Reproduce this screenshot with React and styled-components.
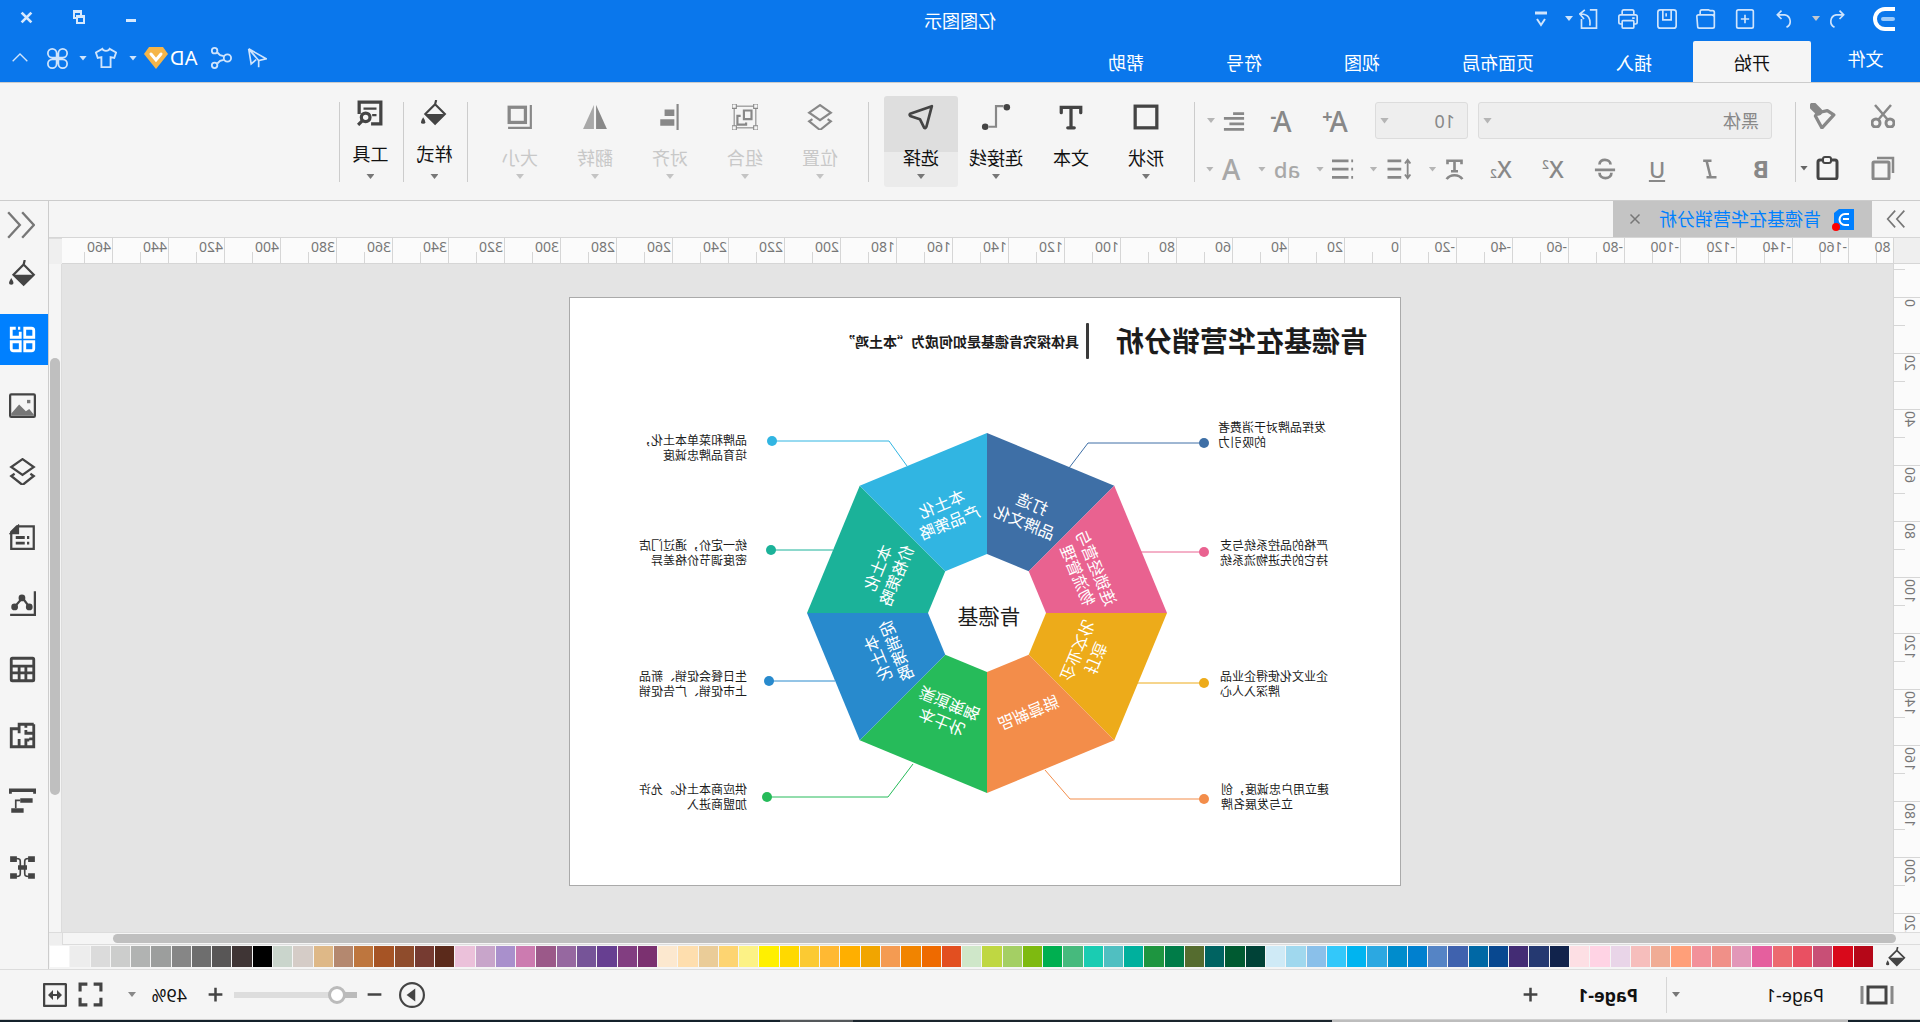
import React from 'react'
import styled, { createGlobalStyle } from 'styled-components'

const GlobalStyle = createGlobalStyle`
    *{ box-sizing:border-box; }
    body{ margin:0; background:#f5f5f5; overflow:hidden; }
    button, select, input{ font:inherit; color:inherit; margin:0; }
    button{ background:none; border:none; padding:0; cursor:pointer; }
    svg{ display:block; flex-shrink:0; }
`

// the whole window is shown flipped, as in a mirrored camera feed
const Window = styled.div`
    height:100vh;
    display:flex;
    flex-direction:column;
    transform:scaleX(-1);
    font-family:"Noto Sans", "Noto Sans CJK SC", sans-serif;
    font-size:18px;
    line-height:24px;
    color:#222;
    background:#f5f5f5;
`
const Caret = styled.span`
    flex-shrink:0;
    width:8px;
    height:5px;
    margin-left:${p => p.$ml || 0}px;
    background:${p => p.$color || '#b5b5b5'};
    clip-path:polygon(0 0, 100% 0, 50% 100%);
`

/* ---------- header ---------- */
const Header = styled.header`
    background:#0a77ec;
    color:#fff;
    border-bottom:1px solid #ccc;
`
const TitleRow = styled.div`
    display:grid;
    grid-template-columns:1fr auto 1fr;
    height:37px;
    align-items:center;
`
const QuickBar = styled.div`
    display:flex;
    align-items:center;
    padding-left:24px;
    color:#cfe4fc;
`
const QuickButton = styled.button`
    width:39px;
    height:36px;
    display:flex;
    align-items:center;
    justify-content:center;
    margin-left:${p => p.$ml || 0}px;
`
const AppTitle = styled.h1`
    margin:0;
    padding-top:4px;
    font-size:18px;
    line-height:24px;
    font-weight:400;
`
const WindowButtons = styled.div`
    display:flex;
    justify-content:flex-end;
    padding:0 1px 3px 0;
    color:#d7e9fd;
`
const WindowButton = styled.button`
    width:52px;
    height:33px;
    display:flex;
    align-items:center;
    justify-content:center;
`
const TabRow = styled.div`
    display:flex;
    height:45px;
    align-items:flex-end;
`
const FileTab = styled.button`
    width:109px;
    height:45px;
    padding-bottom:1px;
`
const Tab = styled.button`
    height:41px;
    padding:2px 41px 0 41px;
    background:${p => p.$active ? '#f5f5f5' : 'none'};
    color:${p => p.$active ? '#111' : '#fff'};
    border-radius:2px 2px 0 0;
`
const UserTools = styled.div`
    display:flex;
    align-items:center;
    height:45px;
    margin-left:auto;
    padding:0 12px 3px 0;
    color:#cfe4fc;
`
const UserButton = styled.button`
    display:flex;
    align-items:center;
    margin-left:${p => p.$ml || 0}px;
`
const UserName = styled.span`
    margin-left:13px;
    font-size:20px;
    color:#fff;
`

/* ---------- ribbon ---------- */
const Ribbon = styled.div`
    display:flex;
    height:118px;
    flex-shrink:0;
    border-bottom:1px solid #ccc;
    color:#888;
`
const Divider = styled.div`
    width:1px;
    height:80px;
    margin-top:19px;
    background:#ccc;
`
const Clipboard = styled.div`
    display:grid;
    grid-template-columns:56px 43px;
    grid-auto-rows:26px;
    row-gap:26px;
    padding:20px 0 0 25px;
    width:124px;
`
const ToolButton = styled.button`
    display:flex;
    align-items:center;
    gap:7px;
    padding-left:${p => p.$pl || 0}px;
    color:${p => p.$dark ? '#444' : 'inherit'};
`
const FontGroup = styled.div`
    padding:19px 0 0 8px;
`
const FontRow = styled.div`
    display:flex;
    align-items:center;
    height:${p => p.$tall ? 37 : 24}px;
    padding-left:${p => p.$tall ? 15 : 0}px;
    margin-bottom:18px;
`
const SelectBox = styled.label`
    display:grid;
    grid-template-columns:1fr 20px;
    align-items:center;
    width:${p => p.$width}px;
    height:37px;
    margin-right:${p => p.$mr}px;
    background:#eee;
    border:1px solid #dcdcdc;
    border-radius:3px;
`
const Select = styled.select`
    grid-area:1 / 1 / 2 / 3;
    appearance:none;
    width:100%;
    height:35px;
    padding:0 12px;
    border:none;
    background:none;
    color:#888;
    outline:none;
`
const SelectArrow = styled(Caret)`
    grid-area:1 / 2 / 2 / 3;
    justify-self:end;
    margin-right:4px;
    width:9px;
    height:6px;
`
const FontButton = styled.button`
    width:${p => p.$width || 52}px;
    height:26px;
    display:flex;
    align-items:center;
    justify-content:center;
    gap:8px;
`
const Glyph = styled.span`
    font-size:${p => p.$size || 24}px;
    line-height:26px;
    font-weight:${p => p.$weight || 500};
    color:${p => p.$light ? '#a8a8a8' : '#888'};
    sup, sub{ font-size:12px; line-height:0; }
    sub{ vertical-align:baseline; }
    b{ font-size:18px; line-height:0; vertical-align:9px; margin-left:-3px; }
`
const BigGroup = styled.div`
    display:flex;
    gap:1px;
    padding:13px ${p => p.$narrow ? 0 : 15}px 0 ${p => p.$narrow ? 0 : 11}px;
`
const BigButton = styled.button`
    width:${p => p.$narrow ? 63 : 74}px;
    height:91px;
    padding:${p => p.$narrow ? '4px 0 8px 2px' : '8px 0'};
    display:flex;
    flex-direction:column;
    align-items:center;
    border-radius:3px;
    color:${p => p.$disabled ? '#888' : '#444'};
    background:${p => p.$active ? 'linear-gradient(#dedede 56px, #ebebeb 56px)' : 'none'};
`
const BigLabel = styled.span`
    margin-top:16px;
    color:${p => p.$disabled ? '#c8c8c8' : '#111'};
`
const BigCaret = styled(Caret)`
    margin-top:auto;
`

/* ---------- workspace ---------- */
const Workspace = styled.div`
    flex:1;
    display:flex;
    min-height:0;
`
const Main = styled.main`
    flex:1;
    min-width:0;
    display:flex;
    flex-direction:column;
`
const DocRow = styled.div`
    display:flex;
    height:37px;
    border-bottom:1px solid #d6d6d6;
`
const Expand = styled.button`
    width:48px;
    display:flex;
    align-items:center;
    justify-content:center;
    color:#777;
`
const DocTab = styled.div`
    width:259px;
    display:flex;
    align-items:center;
    padding-left:18px;
    background:#c4c4c4;
    color:#0080ff;
`
const DocName = styled.span`
    margin:0 18px 0 11px;
    white-space:nowrap;
`
const CloseTab = styled.button`
    color:#777;
`
const Editor = styled.div`
    flex:1;
    min-height:0;
    display:grid;
    grid-template-columns:27px 1fr 13px;
    grid-template-rows:26px 1fr 13px;
`
const Corner = styled.div`
    background:#efefef;
    border-right:1px solid #d6d6d6;
    border-bottom:1px solid #d6d6d6;
`
const RulerTop = styled.div`
    display:flex;
    overflow:hidden;
    background:#fbfbfb;
    border-bottom:1px solid #d6d6d6;
    font-size:14px;
    line-height:18px;
    color:#777;
`
const TopMark = styled.div`
    flex:0 0 56px;
    padding-left:1px;
    border-left:1px solid #d6d6d6;
    background:linear-gradient(#d6d6d6, #d6d6d6) 27px 100% / 1px 11px no-repeat;
    &:first-child{ margin-left:-12px; }
`
const RulerLeft = styled.div`
    overflow:hidden;
    background:#fbfbfb;
    border-right:1px solid #d6d6d6;
    font-size:14px;
    line-height:20px;
    color:#777;
`
const LeftMark = styled.div`
    height:56px;
    border-top:1px solid #d6d6d6;
    background:linear-gradient(#d6d6d6, #d6d6d6) 100% 27px / 11px 1px no-repeat;
    &:first-child{ margin-top:-23px; }
    span{
        display:block;
        width:20px;
        padding-bottom:1px;
        writing-mode:vertical-rl;
        transform:rotate(180deg);
    }
`
const ScrollY = styled.div`
    display:grid;
    grid-template-rows:94fr 437fr 137fr;
    border-left:1px solid #dcdcdc;
    padding:0 1px;
`
const ScrollX = styled.div`
    grid-column:1 / 3;
    display:grid;
    grid-template-columns:24fr 1784fr 50fr;
    border:1px solid #dcdcdc;
    border-left:none;
    padding:1px 0;
`
const Thumb = styled.div`
    grid-area:${p => p.$vertical ? '2 / 1' : '1 / 2'};
    background:#bfbfbf;
    border-radius:5px;
`
const ScrollCorner = styled.div`
    background:#efefef;
    border-top:1px solid #dcdcdc;
`
const Canvas = styled.div`
    overflow:hidden;
    min-height:0;
    background:#e4e4e4;
    padding:33px 0 0 492px;
`
const Page = styled.article`
    position:relative;
    width:832px;
    height:589px;
    border:1px solid #aaa;
    background:#fff;
    color:#1c1c1c;
`
const PageHead = styled.div`
    display:flex;
    align-items:center;
    padding:25px 0 0 32px;
`
const PageTitle = styled.h2`
    margin:0;
    width:279px;
    font-size:28px;
    line-height:36px;
    font-weight:700;
    white-space:nowrap;
`
const TitleBar = styled.div`
    width:3px;
    height:36px;
    border-radius:1px;
    background:#3a3a3a;
    margin-right:7px;
`
const Subtitle = styled.span`
    font-size:14px;
    line-height:20px;
    font-weight:700;
    font-family:"Noto Sans CJK SC", sans-serif;
`
const Diagram = styled.svg`
    position:absolute;
    left:0;
    top:0;
`
const Note = styled.p`
    position:absolute;
    margin:0;
    width:112px;
    left:${p => p.$x}px;
    top:${p => p.$y}px;
    font-size:12px;
    line-height:15px;
    white-space:pre-line;
    text-align:${p => p.$end ? 'right' : 'left'};
    font-family:"Noto Sans CJK SC", sans-serif;
`
const Palette = styled.div`
    display:flex;
    height:24px;
    padding:1px 1px 2px 14px;
    gap:1px;
    color:#444;
`
const PaletteIcon = styled.button`
    width:32px;
`
const Swatch = styled.button`
    flex:1;
    min-width:0;
    height:21px;
    background:${p => p.$color};
`
const Side = styled.aside`
    width:49px;
    border-left:1px solid #ccc;
    display:flex;
    flex-direction:column;
    gap:15px;
    color:#444;
`
const SideTop = styled.button`
    display:flex;
    align-items:flex-start;
    height:32px;
    padding:10px 0 0 13px;
    color:#777;
`
const SideButton = styled.button`
    height:51px;
    padding-left:2px;
    display:flex;
    flex-shrink:0;
    align-items:center;
    justify-content:center;
    background:${p => p.$active ? '#0080ff' : 'none'};
    color:${p => p.$active ? '#fff' : 'inherit'};
`

/* ---------- status bar ---------- */
const Status = styled.footer`
    display:flex;
    align-items:center;
    height:50px;
    flex-shrink:0;
    border-top:1px solid #dcdcdc;
    padding:0 43px 0 26px;
    color:#111;
`
const IconButton = styled.button`
    display:flex;
    margin-left:${p => p.$ml || 0}px;
    color:#444;
`
const PageSelect = styled.select`
    appearance:none;
    border:none;
    background:none;
    outline:none;
    width:144px;
    padding:0;
    margin-left:36px;
`
const StatusDivider = styled.div`
    width:1px;
    height:36px;
    margin-left:5px;
    background:#d6d6d6;
`
const PageTab = styled.button`
    margin-left:28px;
    font-weight:700;
`
const ZoomTools = styled.div`
    display:flex;
    align-items:center;
    margin-left:auto;
`
const Slider = styled.input`
    appearance:none;
    width:123px;
    height:17px;
    margin-left:10px;
    background:linear-gradient(90deg, #bbb 20px, #ddd 20px) 0 50% / 100% 6px no-repeat;
    outline:none;
    &::-webkit-slider-thumb{
        appearance:none;
        width:18px;
        height:18px;
        border-radius:50%;
        background:#fff;
        border:3px solid #bbb;
    }
`
const ZoomValue = styled.span`
    width:40px;
    margin-left:21px;
`
const Taskbar = styled.div`
    display:flex;
    height:3px;
    flex-shrink:0;
    border-top:1px solid #d0d0d0;
`
const TaskPart = styled.div`
    flex:${p => p.$grow};
    background:${p => p.$color};
`

const icons = {
  undo: <path d="M9 2 4 7l5 5M4 7h9a8 8 0 0 1 2 15" />,
  redo: <path d="m15 2 5 5-5 5M20 7h-9a8 8 0 0 0-2 15" />,
  add: <><rect x="2" y="1" width="20" height="22" rx="2" /><path d="M12 7v10M7 12h10" /></>,
  open: <path d="M2 21V4q0-2 2-2h3l2-1h8q2 0 2 2v3M2 21q0 2 2 2h16q2 0 2-2l1-12q0-2-2-2H5Q2 7 2 10z" />,
  save: <><rect x="1" y="1" width="22" height="22" rx="3" /><path d="M7 1v12h10V1M13 5v4" /></>,
  print: <><path d="M5 7V3q0-2 2-2h10q2 0 2 2v4M5 18H3q-2 0-2-2V9q0-2 2-2h18q2 0 2 2v7q0 2-2 2h-2M4 11h3" /><rect x="5" y="14" width="14" height="9" rx="1" /></>,
  exportFile: <path d="M11 1H3v22h18V12M11 20c-1-8 1-14 11-14M17 1l6 5-5 6" />,
  close: <path d="m3 3 18 18M21 3 3 21" />,
  send: <path d="M22 1 1 13l9 2zM22 1l-3 18-6-5M22 1 10 15v8" />,
  share: <><circle cx="5" cy="12" r="4" /><circle cx="19" cy="4" r="3" /><circle cx="19" cy="20" r="3" /><path d="m9 10 4-1 3-3M9 14l4 1 3 3" /></>,
  shirt: <path d="M8 2 1 6l2 6 4-1v11h10V11l4 1 2-6-7-4c-1 3-7 3-8 0z" />,
  clover: <path d="M11 11H6a5 5 0 1 1 5-5zM13 11V6a5 5 0 1 1 5 5zM11 13v5a5 5 0 1 1-5-5zM13 13h5a5 5 0 1 1-5 5z" />,
  up: <path d="m1 17 11-11 11 11" />,
  cut: <><circle cx="5" cy="19" r="4" strokeWidth="3" /><circle cx="19" cy="19" r="4" strokeWidth="3" /><path d="M4 1 17 16M20 1 7 16" strokeWidth="2.500" /></>,
  painter: <><path d="M2 11 8 7l9 2 2 3-6 11z" strokeWidth="3" strokeLinejoin="round" /><path d="m16 8 5-5" strokeWidth="7" strokeLinecap="round" /></>,
  copy: <><path d="M2 17V2h16" strokeWidth="2.500" /><rect x="6" y="6" width="16" height="17" rx="1" strokeWidth="3" /></>,
  paste: <><rect x="2" y="4" width="19" height="19" rx="2" strokeWidth="3" /><rect x="8" y="1" width="8" height="6" rx="2" fill="#f5f5f5" /></>,
  align: <path d="M1 4h12M1 9h22M1 15h16M1 21h22" strokeWidth="3" />,
  italic: <path d="M9 2h10M3 22h12M15 2 10 22" strokeWidth="3" />,
  strike: <path d="M18 7c0-7-12-6-12 0M1 13h22M18 16c0 8-13 8-13 0" />,
  textArc: <path d="M4 6V2h16v4M12 2v12M8 14h8M3 23c4-6 14-6 18 0" strokeWidth="3" />,
  spacing: <><path d="M4 3v18M1 6l3-4 3 4M1 18l3 4 3-4" strokeWidth="2" /><path d="M11 3h15M11 12h15M11 21h15" strokeWidth="3" /></>,
  bullets: <path d="M1 3h2M1 12h2M1 21h2M6 3h18M6 12h18M6 21h18" strokeWidth="3" />,
  shape: <rect x="2" y="2" width="20" height="20" strokeWidth="3" />,
  text: <path d="M3 8V3h18v5M12 3v19M9 22h6" strokeWidth="3" strokeLinecap="round" />,
  connector: <><circle cx="2" cy="3" r="3" fill="currentColor" stroke="none" /><circle cx="22" cy="21" r="3" fill="currentColor" stroke="none" /><path d="M5 2h7v19h7" stroke="#888" /></>,
  pick: <path d="M2 2 22 9q1 1 0 2l-9 3-4 8q-1 1-2-1z" strokeWidth="2.500" strokeLinejoin="round" />,
  layers: <path d="m12 1 10 7-10 7L2 8zM5 14l-3 2 10 8 10-8-3-2" />,
  group: <><rect x="2" y="2" width="20" height="20" strokeWidth="1" /><path d="M0 0h4v4H0zM20 0h4v4h-4zM0 20h4v4H0zM20 20h4v4h-4z" fill="#f5f5f5" strokeWidth="1" /><path d="M6 6h7v8H6zM16 11h3v8h-8v-2" /></>,
  alignTo: <><path d="M5 0v24" strokeWidth="2" /><path d="M8 5h9v6H8zM8 14h13v6H8z" fill="currentColor" stroke="none" /></>,
  flip: <><path d="M11 1v22H1z" fill="currentColor" stroke="none" /><path d="M13 1v22h10z" fill="#a8a8a8" stroke="none" /></>,
  size: <><rect x="7" y="3" width="15" height="14" strokeWidth="3" /><path d="M2 1v21h21" /></>,
  bucket: <><path d="m10 0 1 4M11 4l9 9-9 9-9-9z" /><path d="M3 13h17l-9 9z" fill="currentColor" stroke="none" /><path d="M22 16q4 6 0 6t0-6" fill="currentColor" stroke="none" /></>,
  tools: <><path d="M11 22H2V2h20v11" strokeWidth="3" /><path d="M6 8h12M6 14h4" strokeWidth="2" /><circle cx="16" cy="16" r="4" strokeWidth="3" /><path d="m19 19 4 4" strokeWidth="3" /></>,
  chevronsRight: <path d="m2 2 9 10-9 10M13 2l9 10-9 10" />,
  chevronsLeft: <path d="M11 1 1 12l10 11M23 1 13 12l10 11" />,
  grid: <path d="M2 4q0-2 2-2h6v8H2zM14 10V6M14 2h2M20 10h-6V5M18 2h4v8h-4M2 14h8v8H4q-2 0-2-2zM14 14h8v6q0 2-2 2h-6z" strokeWidth="2.500" />,
  image: <><rect x="1" y="2" width="22" height="20" rx="1" strokeWidth="2" /><path d="M2 20 6 15l3 2 6-6 7 8v2H2z" fill="#777" stroke="none" /><path d="M5 7h3v3H5z" fill="#777" stroke="none" /></>,
  doc: <><path d="M2 2h15l5 5v15H2z" strokeWidth="2" /><path d="M16 2v6h6z" fill="currentColor" /><path d="M6 12h2M10 12h8M6 17h2M10 17h8" strokeWidth="2.500" /></>,
  chart: <><path d="M1 1v21h22M6 15l6-8 7 8" /><circle cx="6" cy="15" r="3" fill="currentColor" stroke="none" /><circle cx="12.500" cy="7" r="3" fill="currentColor" stroke="none" /><circle cx="19" cy="15" r="3" fill="currentColor" stroke="none" /></>,
  table: <><rect x="2" y="2" width="20" height="20" rx="1" strokeWidth="2.500" /><path d="M2 9h20M2 15h20M9 9v13M15 9v13" strokeWidth="2.500" /></>,
  floor: <path d="M2 2h13v8M2 2v20h20V6h-7M2 10h7V7M9 2v3M9 22v-6H6M2 15h4M15 22v-7" strokeWidth="2.500" />,
  gantt: <><path d="M1 5V2h22v3" strokeWidth="3" /><path d="M3 9h11v4H3zM11 18h11v4H11z" fill="currentColor" stroke="none" /><path d="M14 11h4v7" strokeWidth="1.500" /></>,
  mind: <><path d="M1 2h6v5H1zM17 2h6v5h-6zM1 17h6v5H1zM17 17h6v5h-6zM8 10h8v4H8z" fill="currentColor" stroke="none" /><path d="M6 4c5 0 4 1 4 8s1 8-4 8M18 4c-5 0-4 1-4 8s-1 8 4 8" strokeWidth="1.500" /></>,
  plus: <path d="M12 1v22M1 12h22" strokeWidth="4" />,
  minus: <path d="M1 12h22" strokeWidth="4" />,
  play: <><circle cx="12" cy="12" r="11" strokeWidth="2" /><path d="m9 6 8 6-8 6z" fill="currentColor" stroke="none" /></>,
  full: <path d="M9 2H2v7M15 2h7v7M2 15v7h7M22 15v7h-7" strokeWidth="3" />,
  fit: <><rect x="1" y="1" width="22" height="22" rx="1" strokeWidth="2.500" /><path d="M6 12h12" /><path d="m10 7-5 5 5 5zM14 7l5 5-5 5z" fill="currentColor" stroke="none" /></>,
}

const Icon = ({ name, size = 24, width, stroke = 2 }) => (
  <svg
    width={width || size}
    height={size}
    viewBox={`0 0 ${name === 'spacing' ? 28 : 24} 24`}
    fill="none"
    stroke="currentColor"
    strokeWidth={stroke}
  >
    {icons[name]}
  </svg>
)

const tabs = ['开始', '插入', '页面布局', '视图', '符号', '帮助']

const drawTools = [
  { icon: 'shape', label: '形状' },
  { icon: 'text', label: '文本', noCaret: true },
  { icon: 'connector', label: '连接线' },
  { icon: 'pick', label: '选择', active: true },
]
const arrangeTools = [
  { icon: 'layers', label: '位置', disabled: true },
  { icon: 'group', label: '组合', disabled: true },
  { icon: 'alignTo', label: '对齐', disabled: true },
  { icon: 'flip', label: '翻转', disabled: true },
  { icon: 'size', label: '大小', disabled: true },
]
const sideTools = ['bucket', 'grid', 'image', 'layers', 'doc', 'chart', 'table', 'floor', 'gantt', 'mind']

const swatches = `b50718 d9091b c84f76 e95062 ec6a70 e55f9e e297b8 f09088 f2919a ff9f79 f0ac95 f6bebc e9d5e8 ffd3e4 fddfe4
11234c 253971 432c74 084890 0068a5 3f62ae 5584c5 0080cf 008ccc 2ca8e1 00b4f0 33c8fa 8ac0ea a0d8ee cfeaf6
004237 005a31 006361 556c2f 007c48 1e9540 00b09d 50bfc1 1accb2 46ba7d 00af50 7eba10 a4cf64 bfd742 cfe7c9
e24f20 ee6a00 f18400 f49b52 f1a500 ffaf00 ffb933 fbca33 ffd900 fff000 fcf286 fdd471 eacc98 fedeae fce8cf
7b3170 823e81 673f91 765498 9668a0 9b5989 cc7bb0 a990cc c8a5ca ebc1da 5b2a1b 763b31 8f4c2c a65425 be763e
b4886f deb887 d5ccc7 cad5cc 000000 3f3535 585656 6e6e6e 868686 9c9e9d b1b3b2 cccdcc dbdbdb ededed ffffff`.split(/\s+/)

const topMarks = Array.from({ length: 33 }, (_, i) => i * 20 - 180)
const leftMarks = Array.from({ length: 13 }, (_, i) => i * 20 - 20)

// centre and radii of the ring
const CX = 414
const CY = 316
const wedges = [
  { angle: -22.5, color: '#3e6fa6', lines: ['打造', '品牌文化'], dot: [197, 146], path: 'H313L332 171' },
  { angle: -67.5, color: '#e96290', lines: ['连锁经营与', '物流管理'], dot: [197, 255], path: 'H260' },
  { angle: -112.5, color: '#edab1a', lines: ['打造', '企业文化'], dot: [197, 386], path: 'H264' },
  { angle: -157.5, color: '#f38d4a', lines: ['品牌营销'], dot: [197, 502], path: 'H331L356 473' },
  { angle: 157.5, color: '#26bb5a', lines: ['本土化', '渠道策略'], dot: [634, 500], path: 'H513L488 467' },
  { angle: 112.5, color: '#288acd', lines: ['本土化', '促销策略'], dot: [632, 384], path: 'H566' },
  { angle: 67.5, color: '#1bb299', lines: ['本土化', '价格策略'], dot: [630, 253], path: 'H568' },
  { angle: 22.5, color: '#31b5e2', lines: ['本土化', '产品策略'], dot: [629, 144], path: 'H512L494 169' },
]
const notes = [
  { x: 70, y: 121, end: true, text: '发挥品牌对于消费者\n的吸引力' },
  { x: 68, y: 239, end: true, text: '严格的品控系统与支\n持它的先进物流系统' },
  { x: 68, y: 370, end: true, text: '企业文化使得企业品\n牌深入人心' },
  { x: 67, y: 483, end: true, text: '建立用户忠诚度，创\n立与发展名牌' },
  { x: 653, y: 134, text: '品牌和菜单本土化，\n培育品牌忠诚度' },
  { x: 653, y: 239, text: '统一定价，通过门店\n密度调节价格差异' },
  { x: 653, y: 370, text: '生日餐会促销、新品\n上市促销、广告促销' },
  { x: 653, y: 483, text: '供应商本土化。允许\n加盟商进入' },
]

const point = (deg, r) => {
  const a = (deg * Math.PI) / 180
  return `${CX + r * Math.sin(a)},${CY - r * Math.cos(a)}`
}
const wedgePoints = (mid) =>
  [point(mid - 22.5, 180), point(mid + 22.5, 180), point(mid + 22.5, 59), point(mid - 22.5, 59)].join(' ')

const Ring = () => (
  <Diagram width="830" height="587" viewBox="1 1 830 587">
    {wedges.map(w => (
      <g key={w.angle}>
        <path d={`M${w.dot[0]} ${w.dot[1]}${w.path}`} fill="none" stroke={w.color} />
        <circle cx={w.dot[0]} cy={w.dot[1]} r="5" fill={w.color} />
        <polygon points={wedgePoints(w.angle)} fill={w.color} />
        <g transform={`rotate(${w.angle} ${CX} ${CY})`}>
          {w.lines.map((line, i) => (
            <text
              key={line}
              x={CX}
              y={w.lines.length === 1 ? 214 : 204 + i * 20}
              fill="#fff"
              fontSize="16"
              textAnchor="middle"
            >
              {line}
            </text>
          ))}
        </g>
      </g>
    ))}
    <text x="412" y="327" fontSize="21" textAnchor="middle" fill="#1c1c1c">肯德基</text>
  </Diagram>
)

const ToolGroup = ({ items }) => (
  <BigGroup>
    {items.map(t => (
      <BigButton key={t.label} $active={t.active} $disabled={t.disabled}>
        <Icon name={t.icon} size={26} width={t.icon === 'connector' ? 30 : 26} />
        <BigLabel $disabled={t.disabled}>{t.label}</BigLabel>
        {!t.noCaret && <BigCaret $color={t.disabled ? '#c4c4c4' : '#777'} />}
      </BigButton>
    ))}
  </BigGroup>
)

const TopBar = () => (
  <Header>
    <TitleRow>
      <QuickBar>
        <svg width="24" height="24" viewBox="0 0 24 24" fill="none">
          <path d="M1 2h10a10 10 0 0 1 0 20H1" stroke="#fff" strokeWidth="4" />
          <path d="M3 12h10" stroke="#9ccaf9" strokeWidth="4" strokeLinecap="round" />
        </svg>
        <QuickButton $ml={15} aria-label="撤销"><Icon name="undo" size={20} /></QuickButton>
        <Caret $ml={-2} $color="#c3c8cf" />
        <QuickButton $ml={8} aria-label="恢复"><Icon name="redo" size={20} /></QuickButton>
        <QuickButton aria-label="新建"><Icon name="add" size={20} /></QuickButton>
        <QuickButton aria-label="打开"><Icon name="open" size={20} width={22} /></QuickButton>
        <QuickButton aria-label="保存"><Icon name="save" size={20} /></QuickButton>
        <QuickButton aria-label="打印"><Icon name="print" size={20} width={24} /></QuickButton>
        <QuickButton aria-label="导出"><Icon name="exportFile" size={20} /></QuickButton>
        <Caret $ml={-3} $color="#cfe4fc" />
        <QuickButton $ml={4} aria-label="更多">
          <svg width="12" height="16" viewBox="0 0 12 16" fill="none" stroke="currentColor" strokeWidth="2">
            <path d="M0 2h12" strokeWidth="3" />
            <path d="m2 8 4 6 4-6" />
          </svg>
        </QuickButton>
      </QuickBar>
      <AppTitle>亿图图示</AppTitle>
      <WindowButtons>
        <WindowButton aria-label="最小化">
          <svg width="12" height="12" viewBox="0 0 12 12"><path d="M1 8h10v3H1z" fill="currentColor" /></svg>
        </WindowButton>
        <WindowButton aria-label="还原">
          <svg width="12" height="14" viewBox="0 0 12 14" fill="none" stroke="currentColor" strokeWidth="2">
            <path d="M1 6h7v7H1zM4 6V1h7v7H8M1 7h7M4 2h7" />
          </svg>
        </WindowButton>
        <WindowButton aria-label="关闭"><Icon name="close" size={13} stroke={5} /></WindowButton>
      </WindowButtons>
    </TitleRow>
    <TabRow>
      <FileTab>文件</FileTab>
      {tabs.map((t, i) => <Tab key={t} $active={i === 0}>{t}</Tab>)}
      <UserTools>
        <UserButton aria-label="发送"><Icon name="send" size={20} /></UserButton>
        <UserButton $ml={15} aria-label="分享"><Icon name="share" size={22} /></UserButton>
        <UserName>AD</UserName>
        <UserButton $ml={2} aria-label="会员">
          <svg width="24" height="22" viewBox="0 0 24 22">
            <path d="M5 0h14l5 7-12 15L0 7z" fill="#f5b549" />
            <path d="m7 7 5 6 5-6" fill="none" stroke="#fff" strokeWidth="3" strokeLinecap="round" />
          </svg>
        </UserButton>
        <Caret $ml={7} $color="#cfe4fc" />
        <UserButton $ml={12} aria-label="皮肤"><Icon name="shirt" size={22} /></UserButton>
        <Caret $ml={8} $color="#cfe4fc" />
        <UserButton $ml={11} aria-label="应用"><Icon name="clover" size={21} /></UserButton>
        <UserButton $ml={19} aria-label="收起"><Icon name="up" size={16} /></UserButton>
      </UserTools>
    </TabRow>
  </Header>
)

const RibbonBar = () => (
  <Ribbon>
    <Clipboard>
      <ToolButton aria-label="剪切"><Icon name="cut" /></ToolButton>
      <ToolButton $pl={3} aria-label="格式刷"><Icon name="painter" size={26} /></ToolButton>
      <ToolButton aria-label="复制"><Icon name="copy" /></ToolButton>
      <ToolButton $dark aria-label="粘贴"><Icon name="paste" /><Caret $color="#666" /></ToolButton>
    </Clipboard>
    <Divider />
    <FontGroup>
      <FontRow $tall>
        <SelectBox $width={294} $mr={10}>
          <Select aria-label="字体"><option>黑体</option></Select>
          <SelectArrow />
        </SelectBox>
        <SelectBox $width={93} $mr={13}>
          <Select aria-label="字号"><option>10</option></Select>
          <SelectArrow />
        </SelectBox>
        <FontButton $width={54}><Glyph $size={28}>A<b>+</b></Glyph></FontButton>
        <FontButton $width={54}><Glyph $size={28}>A<b>-</b></Glyph></FontButton>
        <FontButton $width={56} aria-label="对齐"><Icon name="align" size={22} /><Caret /></FontButton>
      </FontRow>
      <FontRow>
        <FontButton><Glyph $weight={700}>B</Glyph></FontButton>
        <FontButton aria-label="斜体"><Icon name="italic" size={20} /></FontButton>
        <FontButton><Glyph $size={22}><u>U</u></Glyph></FontButton>
        <FontButton aria-label="删除线"><Icon name="strike" size={22} stroke={3} /></FontButton>
        <FontButton><Glyph>X<sup>2</sup></Glyph></FontButton>
        <FontButton><Glyph>X<sub>2</sub></Glyph></FontButton>
        <FontButton $width={56} aria-label="文字效果"><Icon name="textArc" size={21} /><Caret /></FontButton>
        <FontButton $width={56} aria-label="行距"><Icon name="spacing" size={22} width={27} /><Caret /></FontButton>
        <FontButton $width={56} aria-label="项目符号"><Icon name="bullets" size={22} /><Caret /></FontButton>
        <FontButton $width={56}><Glyph $light $size={22}>ab</Glyph><Caret /></FontButton>
        <FontButton $width={56}><Glyph $light $size={28}>A</Glyph><Caret /></FontButton>
      </FontRow>
    </FontGroup>
    <Divider />
    <ToolGroup items={drawTools} />
    <Divider />
    <ToolGroup items={arrangeTools} />
    <Divider />
    <BigGroup $narrow>
      <BigButton $narrow>
        <Icon name="bucket" size={26} />
        <BigLabel>样式</BigLabel>
        <BigCaret $color="#777" />
      </BigButton>
    </BigGroup>
    <Divider />
    <BigGroup $narrow>
      <BigButton $narrow>
        <Icon name="tools" size={26} />
        <BigLabel>工具</BigLabel>
        <BigCaret $color="#777" />
      </BigButton>
    </BigGroup>
    <Divider />
  </Ribbon>
)

const StatusBar = () => (
  <Status>
    <IconButton aria-label="页面视图">
      <svg width="34" height="20" viewBox="0 0 34 20" fill="none" stroke="currentColor">
        <path d="M2 1v18M32 1v18" stroke="#888" strokeWidth="3" />
        <rect x="8" y="2" width="18" height="16" strokeWidth="3" />
      </svg>
    </IconButton>
    <PageSelect aria-label="页面"><option>Page-1</option></PageSelect>
    <Caret $color="#777" />
    <StatusDivider />
    <PageTab>Page-1</PageTab>
    <IconButton $ml={40} aria-label="新建页"><Icon name="plus" size={15} /></IconButton>
    <ZoomTools>
      <IconButton aria-label="播放"><Icon name="play" size={26} /></IconButton>
      <IconButton $ml={17} aria-label="缩小"><Icon name="minus" size={15} /></IconButton>
      <Slider type="range" min="0" max="100" defaultValue="10" aria-label="缩放" />
      <IconButton $ml={11} aria-label="放大"><Icon name="plus" size={15} /></IconButton>
      <ZoomValue>49%</ZoomValue>
      <Caret $ml={11} $color="#888" />
      <IconButton $ml={25} aria-label="全屏"><Icon name="full" size={25} /></IconButton>
      <IconButton $ml={11} aria-label="适应宽度"><Icon name="fit" size={24} /></IconButton>
    </ZoomTools>
  </Status>
)

const App = () => {
  return (<>
    <GlobalStyle />
    <Window>
      <TopBar />
      <RibbonBar />
      <Workspace>
        <Main>
          <DocRow>
            <Expand aria-label="展开"><Icon name="chevronsRight" size={20} /></Expand>
            <DocTab>
              <svg width="22" height="24" viewBox="0 0 22 24" fill="none">
                <path d="M0 2h15l5 4v17H0z" fill="#0080ff" />
                <path d="M5 7h4a5 5 0 0 1 0 11H5M5 12h6" stroke="#fff" strokeWidth="2" />
                <circle cx="18" cy="20" r="4" fill="#f00" />
              </svg>
              <DocName>肯德基在华营销分析</DocName>
              <CloseTab aria-label="关闭文档"><Icon name="close" size={12} stroke={3} /></CloseTab>
            </DocTab>
          </DocRow>
          <Editor>
            <Corner />
            <RulerTop>
              {topMarks.map(m => <TopMark key={m}>{m}</TopMark>)}
            </RulerTop>
            <ScrollCorner />
            <RulerLeft>
              {leftMarks.map(m => <LeftMark key={m}>{m >= 0 && <span>{m}</span>}</LeftMark>)}
            </RulerLeft>
            <Canvas>
              <Page>
                <PageHead>
                  <PageTitle>肯德基在华营销分析</PageTitle>
                  <TitleBar />
                  <Subtitle>具体探究肯德基是如何成为“本土鸡”</Subtitle>
                </PageHead>
                <Ring />
                {notes.map(n => <Note key={n.text} $x={n.x} $y={n.y} $end={n.end}>{n.text}</Note>)}
              </Page>
            </Canvas>
            <ScrollY><Thumb $vertical /></ScrollY>
            <ScrollX><Thumb /></ScrollX>
            <ScrollCorner />
          </Editor>
          <Palette>
            <PaletteIcon aria-label="填充"><Icon name="bucket" size={20} /></PaletteIcon>
            {swatches.map(c => <Swatch key={c} $color={`#${c}`} aria-label={c} />)}
          </Palette>
        </Main>
        <Side>
          <SideTop aria-label="折叠"><Icon name="chevronsLeft" size={28} stroke={2} /></SideTop>
          {sideTools.map(name => (
            <SideButton key={name} $active={name === 'grid'} aria-label={name}>
              <Icon name={name} size={27} />
            </SideButton>
          ))}
        </Side>
      </Workspace>
      <StatusBar />
      <Taskbar>
        <TaskPart $grow={72} $color="#14212b" />
        <TaskPart $grow={516} $color="#bdbdbd" />
        <TaskPart $grow={479} $color="#1a252d" />
        <TaskPart $grow={73} $color="#54585b" />
        <TaskPart $grow={780} $color="#14212b" />
      </Taskbar>
    </Window>
  </>)
}

export default App
